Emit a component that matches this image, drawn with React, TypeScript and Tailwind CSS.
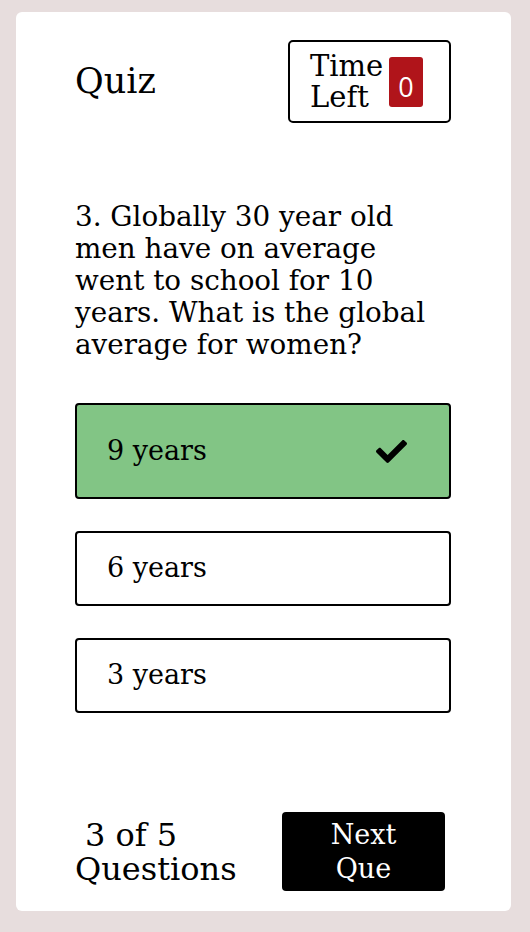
import { FaCheck } from "react-icons/fa";

const options = [
  { label: "9 years", correct: true },
  { label: "6 years", correct: false },
  { label: "3 years", correct: false },
];

export default function App() {
  return (
    <div className="min-h-screen bg-[#e7dddd] pt-3 pl-4 font-['DejaVu_Serif',serif] text-black">
      <div className="flex h-[899px] w-[495px] flex-col rounded-md bg-white pl-[59px] pr-[60px]">
        <div className="mt-[28px] flex items-center justify-between">
          <h1 className="text-[35px] leading-none">Quiz</h1>
          <div className="flex h-[83px] w-[163px] items-center justify-between rounded-[5px] border-2 border-black pl-[20px] pr-[26px]">
            <div className="text-[29px] leading-[31px]">
              Time
              <br />
              Left
            </div>
            <div className="flex h-[50px] w-[34px] items-center justify-center rounded-[3px] bg-[#b0141a] pt-[10px] font-['Open_Sans',sans-serif] text-[27px] leading-none text-white">
              0
            </div>
          </div>
        </div>

        <p className="mt-[78px] text-[27.8px] leading-[32px]">
          3. Globally 30 year old men have on average went to school for 10 years. What is the global average for
          women?
        </p>

        <div className="mt-[42px] flex flex-col gap-[32px]">
          {options.map((o) => (
            <div
              key={o.label}
              className={
                o.correct
                  ? "flex h-[96px] items-center justify-between rounded-[4px] border-2 border-black bg-[#82c585] pl-[30px] pr-[42px]"
                  : "flex h-[75px] items-center justify-between rounded-[4px] border-2 border-black bg-white pl-[30px] pr-[42px]"
              }
            >
              <span className="text-[27px]">{o.label}</span>
              {o.correct && <FaCheck className="h-[31px] w-[31px]" />}
            </div>
          ))}
        </div>

        <div className="mt-auto mb-[20px] flex items-center justify-between pr-[6px]">
          <div className="text-[32px] leading-[34px]">
            <span className="pl-[10px]">3 of 5</span>
            <br />
            Questions
          </div>
          <button className="flex h-[79px] w-[163px] flex-col items-center justify-center rounded-[4px] bg-black text-[27px] leading-[34px] text-white">
            <span>Next</span>
            <span>Que</span>
          </button>
        </div>
      </div>
    </div>
  );
}
